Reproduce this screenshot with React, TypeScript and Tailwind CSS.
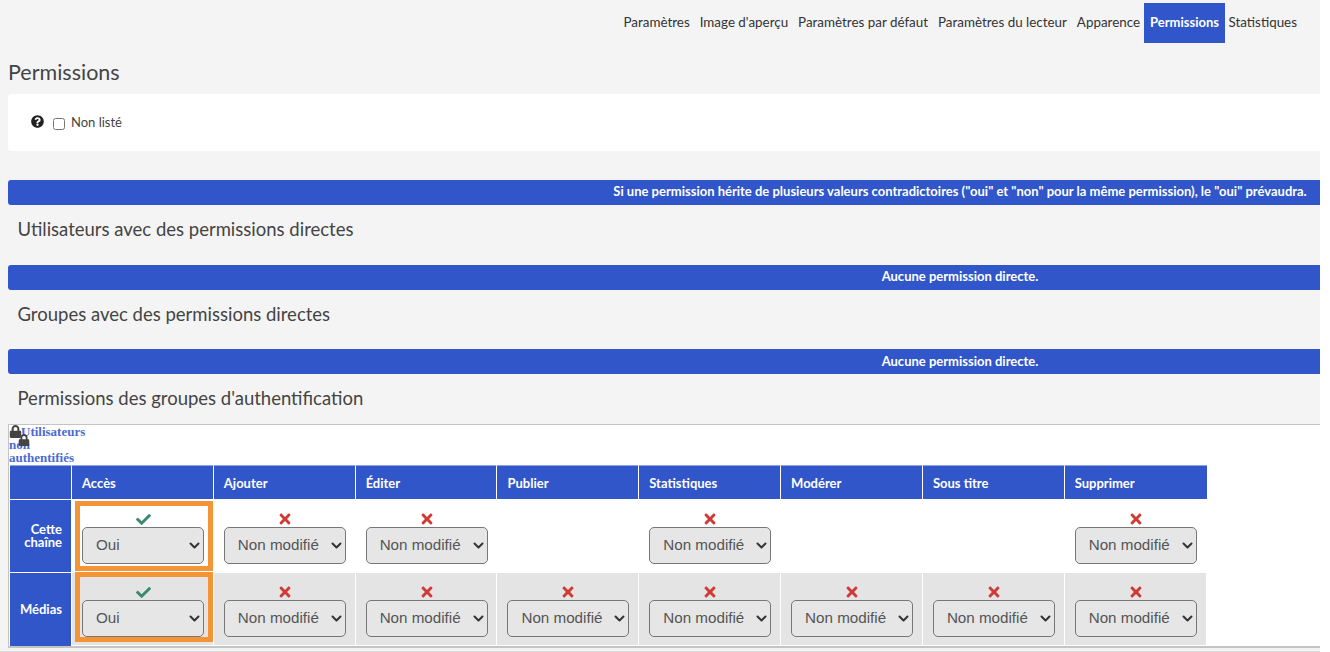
import React from "react";
import { FaCheck, FaTimes, FaQuestionCircle, FaLock } from "react-icons/fa";

const navItems = ["Paramètres", "Image d'aperçu", "Paramètres par défaut", "Paramètres du lecteur", "Apparence", "Permissions", "Statistiques"];
const cols = ["Accès", "Ajouter", "Éditer", "Publier", "Statistiques", "Modérer", "Sous titre", "Supprimer"];

function Choice({ yes }: { yes: boolean }) {
  return (
    <div className="w-[122px]">
      <div className="flex h-[16px] items-center justify-center">
        {yes ? <FaCheck className="text-[15px] text-[#3b8a6c]" /> : <FaTimes className="text-[16px] text-[#cf3a34]" />}
      </div>
      <div className="relative h-[37px] w-[122px]">
        <select
          defaultValue={yes ? "Oui" : "Non modifié"}
          className="h-[37px] w-[122px] appearance-none rounded-[5px] border border-[#777777] bg-[#e6e6e6] pl-[13px] font-['Liberation_Sans',sans-serif] text-[15.2px] text-[#555555]"
        >
          <option>{yes ? "Oui" : "Non modifié"}</option>
        </select>
        <svg className="pointer-events-none absolute right-[4px] top-[15px] h-[8px] w-[11px]" viewBox="0 0 11 8" fill="none">
          <path d="M1.5 1.5 L5.5 5.5 L9.5 1.5" stroke="#333333" strokeWidth="2" strokeLinecap="round" strokeLinejoin="round" />
        </svg>
      </div>
    </div>
  );
}

function Cell({ show = true, highlight = false, yes = false, grey = false }: { show?: boolean; highlight?: boolean; yes?: boolean; grey?: boolean }) {
  return (
    <td className={`border-b border-r border-white p-0 align-top ${grey ? "bg-[#e4e4e4]" : "bg-white"}`}>
      {highlight ? (
        <div
          className={
            grey
              ? "ml-[3px] mt-[-1px] h-[70px] w-[138px] border-[5px] border-[#f39536] pl-[2px] pt-[7px]"
              : "ml-[3px] mt-[1px] h-[70px] w-[138px] border-[5px] border-[#f39536] pl-[2px] pt-[5px]"
          }
        >
          <Choice yes={yes} />
        </div>
      ) : (
        <div className="h-[72px] pl-[10px] pt-[11px]">{show && <Choice yes={yes} />}</div>
      )}
    </td>
  );
}

function Bar({ text, low = false }: { text: string; low?: boolean }) {
  return (
    <div
      className={`ml-[8px] flex h-[25px] items-center justify-center rounded-l-[3px] bg-[#3056c9] pl-[592px] text-[13px] font-bold whitespace-nowrap text-white ${low ? "" : "pb-[1px]"}`}
    >
      {text}
    </div>
  );
}

function Heading({ text, cls }: { text: string; cls: string }) {
  return <h3 className={`ml-[17.5px] text-[18.5px] leading-[24px] text-[#444444] ${cls}`}>{text}</h3>;
}

export default function App() {
  return (
    <div className="h-[652px] w-[1330px] overflow-hidden bg-white font-['Lato',sans-serif]">
      <main className="h-[652px] w-[1320px] bg-[#f4f4f4] pt-[3px]">
        <nav className="flex h-[40px] items-stretch justify-end pr-[18px] text-[13.4px] text-[#333333]">
          {navItems.map((n) => (
            <a key={n} className={`flex items-center ${n === "Permissions" ? "mx-[-1px] bg-[#3056c9] pl-[6px] pr-[5.5px] text-[13px] font-bold text-white" : "px-[5px] pb-[1px]"}`}>
              {n}
            </a>
          ))}
        </nav>
        <h2 className="ml-[8px] mt-[16px] text-[21.5px] leading-[27px] text-[#444444]">Permissions</h2>
        <section className="ml-[8px] mt-[8px] flex h-[57px] items-center rounded-l-[3px] bg-white pl-[23px] text-[13px] text-[#444444]">
          <FaQuestionCircle className="-mt-[2px] text-[13px] text-[#222222]" />
          <input type="checkbox" readOnly className="ml-[9px] mr-[6px] mt-[3px] h-[12px] w-[12px]" />
          <span>Non listé</span>
        </section>
        <div className="mt-[29px]"><Bar text={`Si une permission hérite de plusieurs valeurs contradictoires ("oui" et "non" pour la même permission), le "oui" prévaudra.`} /></div>
        <Heading text="Utilisateurs avec des permissions directes" cls="mt-[12px]" />
        <div className="mt-[24px]"><Bar text="Aucune permission directe." /></div>
        <Heading text="Groupes avec des permissions directes" cls="mt-[12px]" />
        <div className="mt-[23px]"><Bar low text="Aucune permission directe." /></div>
        <Heading text="Permissions des groupes d'authentification" cls="mt-[12px]" />
        <section className="ml-[8px] mt-[14px] h-[224px] border-b-2 border-l border-t border-[#c4c4c4] bg-white">
          <div className="relative h-[40px] w-[80px] font-['Liberation_Serif',serif] text-[13px] font-bold leading-[13px] text-[#4a6bd2]">
            <FaLock className="absolute left-0 top-0 text-[13px] text-[#444444]" />
            <FaLock className="absolute left-[9px] top-[9px] text-[12px] text-[#444444]" />
            <span className="block indent-[12px]">Utilisateurs non authentifiés</span>
          </div>
          <table className="ml-px w-[1196.5px] table-fixed border-separate border-spacing-0 text-[13px]">
            <colgroup>
              <col className="w-[62px]" />
              {cols.map((c) => <col key={c} />)}
            </colgroup>
            <thead>
              <tr className="h-[35px] bg-[#3056c9] text-white">
                <th className="border-b border-r border-t border-white border-t-[#8fa5e3]" />
                {cols.map((c) => (
                  <th key={c} className="border-b border-r border-t border-white border-t-[#8fa5e3] pl-[10px] pt-[2px] text-left font-bold last:border-r-0">{c}</th>
                ))}
              </tr>
            </thead>
            <tbody>
              <tr>
                <th className="border-b border-r border-white bg-[#3056c9] pr-[9px] text-right font-bold leading-[13px] text-white">Cette<br />chaîne</th>
                <Cell highlight yes />
                <Cell />
                <Cell />
                <Cell show={false} />
                <Cell />
                <Cell show={false} />
                <Cell show={false} />
                <Cell />
              </tr>
              <tr>
                <th className="border-r border-white bg-[#3056c9] pr-[9px] text-right font-bold text-white">Médias</th>
                <Cell highlight yes grey />
                {[0, 1, 2, 3, 4, 5, 6].map((i) => <Cell key={i} grey />)}
              </tr>
            </tbody>
          </table>
        </section>
        <div className="mt-[3px] border-t border-[#dddddd]" />
      </main>
    </div>
  );
}
